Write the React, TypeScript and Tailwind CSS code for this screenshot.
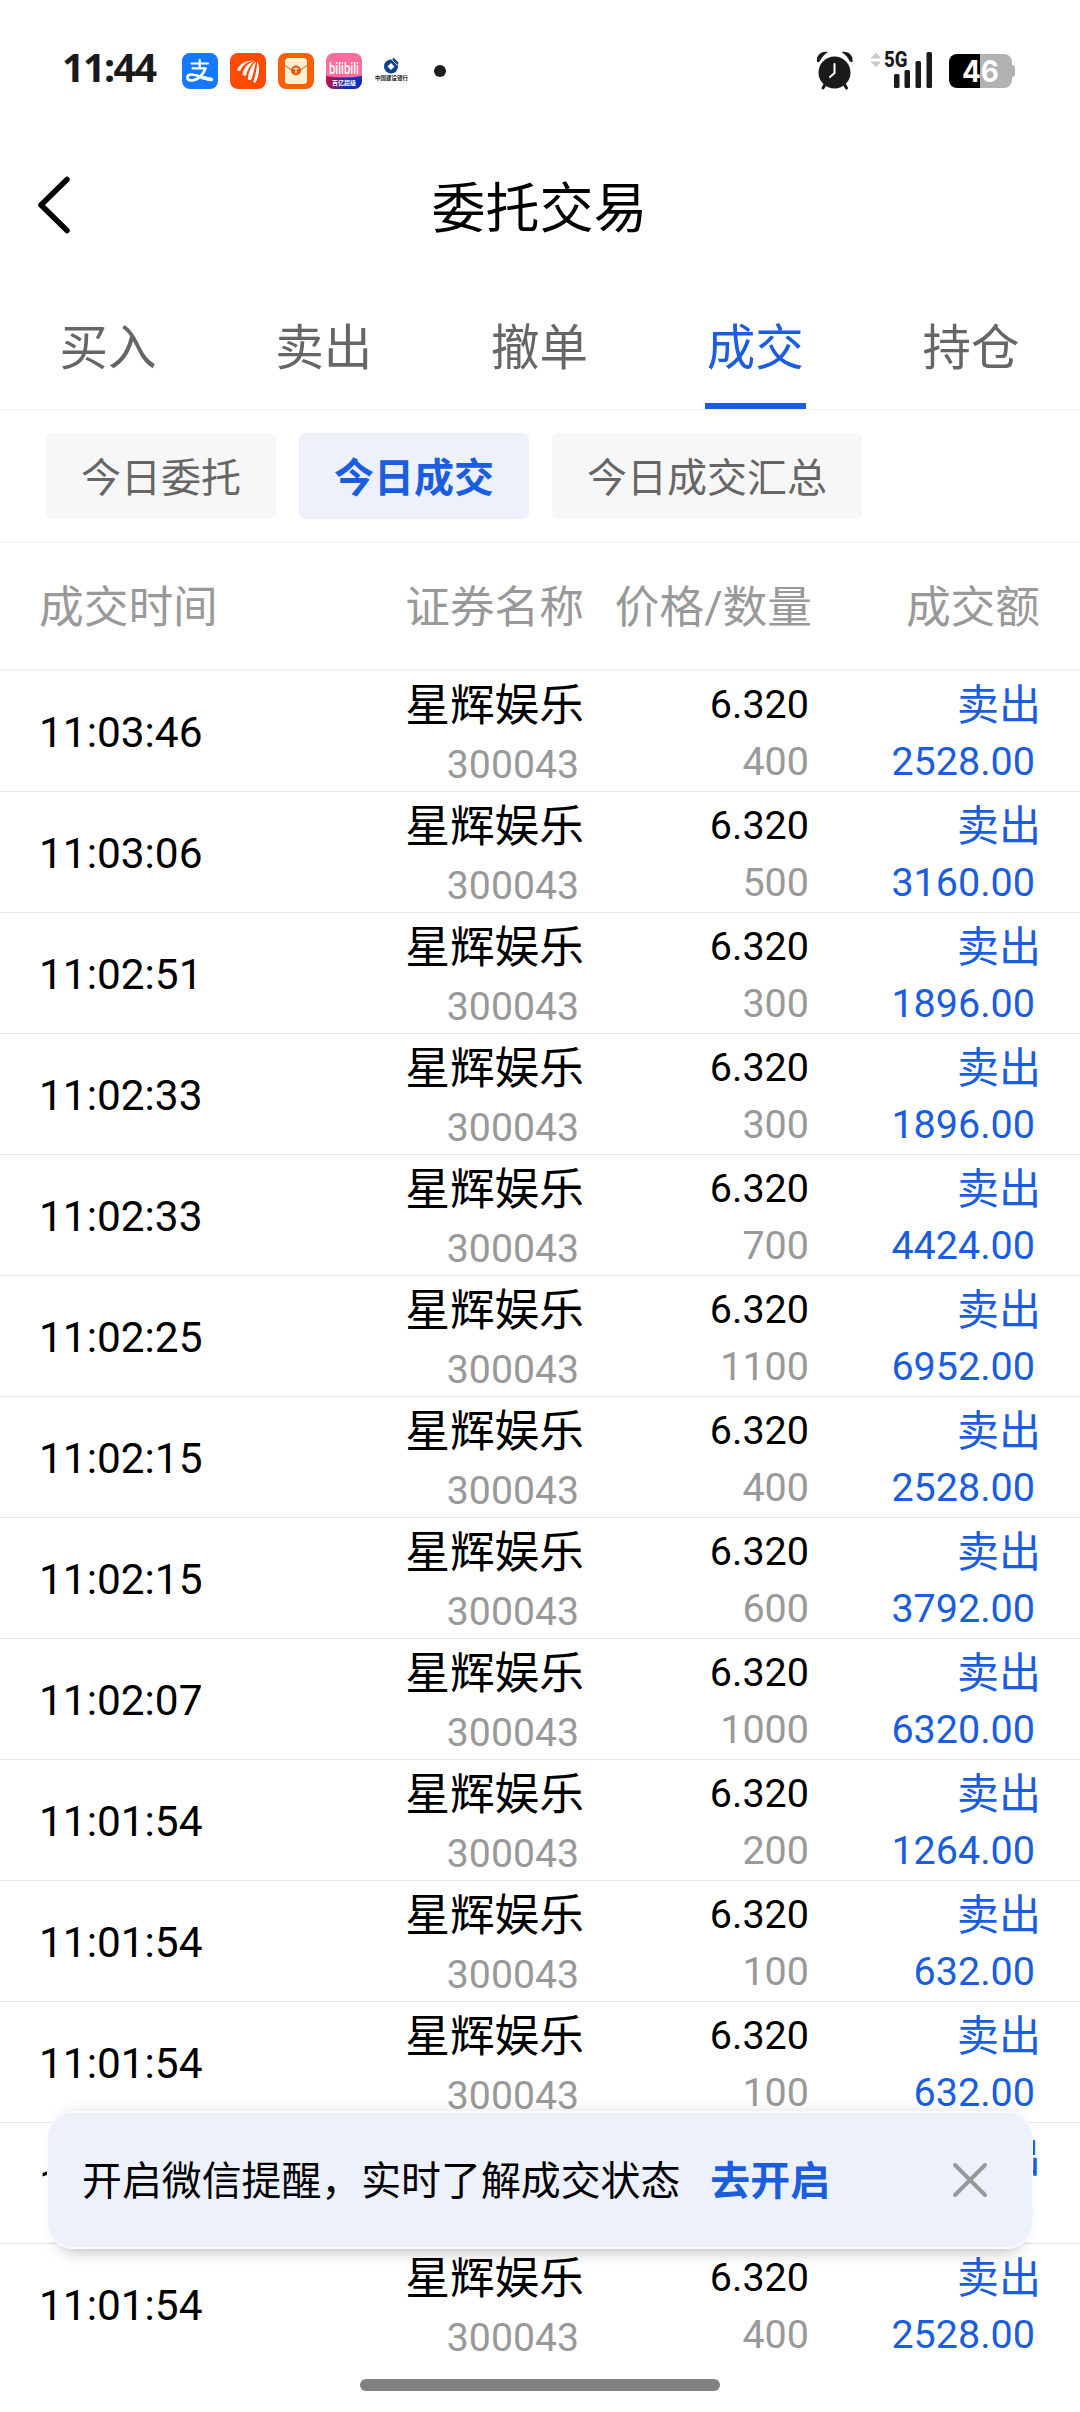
type Trade = {
  time: string;
  qty: string;
  amount: string;
};

const tabs = ["买入", "卖出", "撤单", "成交", "持仓"];
const filters = ["今日委托", "今日成交", "今日成交汇总"];

const trades: Trade[] = [
  { time: "11:03:46", qty: "400", amount: "2528.00" },
  { time: "11:03:06", qty: "500", amount: "3160.00" },
  { time: "11:02:51", qty: "300", amount: "1896.00" },
  { time: "11:02:33", qty: "300", amount: "1896.00" },
  { time: "11:02:33", qty: "700", amount: "4424.00" },
  { time: "11:02:25", qty: "1100", amount: "6952.00" },
  { time: "11:02:15", qty: "400", amount: "2528.00" },
  { time: "11:02:15", qty: "600", amount: "3792.00" },
  { time: "11:02:07", qty: "1000", amount: "6320.00" },
  { time: "11:01:54", qty: "200", amount: "1264.00" },
  { time: "11:01:54", qty: "100", amount: "632.00" },
  { time: "11:01:54", qty: "100", amount: "632.00" },
  { time: "11:01:54", qty: "100", amount: "632.00" },
  { time: "11:01:54", qty: "400", amount: "2528.00" },
];

function AppIcons() {
  return (
    <div className="flex shrink-0 items-center gap-3">
      <svg width="36" height="36" viewBox="0 0 36 36">
        <rect width="36" height="36" rx="8" fill="#1677ff" />
        <g fill="none" stroke="#fff" strokeLinecap="round">
          <path d="M9.500 10.500h16.500M17.700 7v8M10.500 15.300h13" strokeWidth="2.200" />
          <path d="M23.500 15.500C21.500 21 16 27.500 9.500 27.500C4 27.500 4 21.500 9.500 21.500C15.500 21.500 21 25.500 29 27" strokeWidth="2.600" />
          <path d="M20 24.500L29.500 26.500" strokeWidth="3.500" />
        </g>
      </svg>
      <svg width="36" height="36" viewBox="0 0 36 36">
        <rect width="36" height="36" rx="8" fill="#ff4a00" />
        <g fill="#fff">
          <path d="M7 17.500C9 11.500 15 7.500 23.500 7.500C17 9 12.500 12 10.500 17.500Q9 18.300 7 17.500Z" />
          <path d="M12.500 22C13 16 17 10.500 25 7.800C20 12 17.500 16.500 16 22.500Q14 23.300 12.500 22Z" />
          <path d="M17.800 26C18.500 19 21.500 12 26 8.500C24.500 14.500 23.800 20 21.300 26.500Q19 27.500 17.800 26Z" />
          <path d="M23.300 29C25.500 22.500 27 15 27.300 8C30 14 29.500 23 25.500 29.500Q24.200 30 23.300 29Z" />
        </g>
      </svg>
      <svg width="36" height="36" viewBox="0 0 36 36">
        <rect width="36" height="36" rx="8" fill="#fb5f06" />
        <rect x="7" y="5" width="22" height="26" rx="3.500" fill="#fff0cf" />
        <path d="M7 12.500L15 18M29 12.500L21 18" stroke="#c9602c" strokeWidth="1" />
        <circle cx="18" cy="17.500" r="5" fill="#e2571a" />
        <path d="M15.500 15.500h5M18 15.500v5" stroke="#ffdca8" strokeWidth="1.400" />
      </svg>
      <svg width="36" height="36" viewBox="0 0 36 36" overflow="visible">
        <defs>
          <linearGradient id="bili" x1="0" x2="1" y1="0" y2="0">
            <stop offset="0" stopColor="#c4123f" />
            <stop offset="0.6" stopColor="#0b2fc4" />
          </linearGradient>
          <clipPath id="biliClip">
            <rect width="36" height="36" rx="8" />
          </clipPath>
        </defs>
        <g clipPath="url(#biliClip)">
          <rect width="36" height="36" fill="#fb6d9a" />
          <path d="M0 23Q18 26 36 23V36H0Z" fill="url(#bili)" />
        </g>
        <text x="18" y="21" textAnchor="middle" textLength="30" lengthAdjust="spacingAndGlyphs" fontSize="16" fontWeight="500" fill="#fff">
          bilibili
        </text>
        <text x="18" y="32" textAnchor="middle" fontSize="6" fontWeight="700" fill="#fff">
          百亿超级
        </text>
      </svg>
      <svg width="36" height="36" viewBox="0 0 36 36" overflow="visible">
        <circle cx="17" cy="13.500" r="7" fill="#0d4192" />
        <path d="M17 10l3.500 3.500-3.500 3.500-3.500-3.500z" fill="#fff" />
        <path d="M19 5.500l5 5" stroke="#0d4192" strokeWidth="2" />
        <path d="M17.500 6.500l6 6" stroke="#fff" strokeWidth="0.800" />
        <text x="17.500" y="27" textAnchor="middle" fontSize="5.500" fontWeight="700" fill="#222">
          中国建设银行
        </text>
      </svg>
    </div>
  );
}

function StatusBar() {
  return (
    <div className="flex h-[142px] items-center pl-[62px] pr-[65px] text-[#1a1a1a]">
      <span className="w-[120px] shrink-0 pb-[6px] font-['Noto_Sans'] text-[39.5px] font-bold leading-none tracking-[-1.6px]">11:44</span>
      <AppIcons />
      <span className="ml-[24px] size-3 rounded-full bg-[#1a1a1a]" />
      <svg className="ml-auto" width="38" height="40" viewBox="0 0 38 40">
        <g fill="#1a1a1a">
          <circle cx="18.500" cy="21.500" r="16" />
          <path d="M1 10.500C0 4 6 -0.500 12 1Q7 4 3.500 10.500Q2 11.500 1 10.500Z" />
          <path d="M36.500 10.500C37.500 4 31.500 -0.500 25.500 1Q30.500 4 34 10.500Q35.500 11.500 36.500 10.500Z" />
        </g>
        <path d="M9 33.500l-2 3.500M28.500 33.500l2 3.500" stroke="#1a1a1a" strokeWidth="3" strokeLinecap="round" />
        <path d="M18.500 13v9l-4.500 4" fill="none" stroke="#fff" strokeWidth="2" strokeLinecap="round" />
      </svg>
      <svg className="ml-4" width="63" height="40" viewBox="0 0 63 40" overflow="visible">
        <path d="M6 1.500l4.500 5v1h-9.500v-1zM1 10.500h9.500v1l-4.500 4.500-5-4.500z" fill="#cbcbcb" />
        <text x="14" y="16" fontFamily="Roboto" fontSize="21.500" fontWeight="800" textLength="23.500" lengthAdjust="spacingAndGlyphs" fill="#1a1a1a">
          5G
        </text>
        <g fill="#1a1a1a">
          <rect x="24" y="23" width="5.500" height="14" rx="1.500" />
          <rect x="34.500" y="19" width="5.500" height="18" rx="1.500" />
          <rect x="45.500" y="10" width="5.500" height="27" rx="1.500" />
          <rect x="56.500" y="1" width="5.500" height="36" rx="1.500" />
        </g>
      </svg>
      <svg className="ml-4" width="66" height="34" viewBox="0 0 66 34">
        <path d="M31 0h24a8 8 0 0 1 8 8v3q3 0 3 3v6q0 3-3 3v3a8 8 0 0 1-8 8h-24z" fill="#b2b2b2" />
        <path d="M31 0h-23a8 8 0 0 0-8 8v18a8 8 0 0 0 8 8h23z" fill="#000" />
        <text x="31.500" y="28" textAnchor="middle" fontFamily="Inter" fontSize="30" fontWeight="700" fill="#fff" textLength="37" lengthAdjust="spacingAndGlyphs">
          46
        </text>
      </svg>
    </div>
  );
}

function Header() {
  return (
    <header className="flex h-[130px] items-center justify-between px-[36px]">
      <svg className="-mt-1" width="36" height="60" viewBox="0 0 36 60" fill="none">
        <path d="M31 4.500L5 30l26 25.500" stroke="#000" strokeWidth="5.500" strokeLinecap="round" strokeLinejoin="round" />
      </svg>
      <h1 className="pt-[5px] text-[54px] leading-none text-black">委托交易</h1>
      <span className="w-[37px]" />
    </header>
  );
}

function Tabs() {
  return (
    <nav className="grid h-[138px] grid-cols-5 border-b border-[#f0f0f0] pr-px">
      {tabs.map((tab) => (
        <div key={tab} className="flex justify-center">
          <span
            className={
              tab === "成交"
                ? "flex w-[101px] items-center justify-center border-b-[6px] border-[#1a5ddf] pt-[23px] text-[48.5px] text-[#1a5ddf]"
                : "flex w-[101px] items-center justify-center border-b-[6px] border-transparent pt-[23px] text-[48.5px] text-[#666]"
            }
          >
            {tab}
          </span>
        </div>
      ))}
    </nav>
  );
}

function Filters() {
  return (
    <div className="flex h-[133px] items-center gap-[23px] border-b border-[#f3f3f3] pl-[46px]">
      {filters.map((filter) => (
        <span
          key={filter}
          className={
            filter === "今日成交"
              ? "flex h-[86px] items-center rounded-md bg-[#ecf1fc] px-[35px] pt-[5px] text-[40px] font-bold text-[#1a5ddf]"
              : "flex h-[86px] items-center rounded-md bg-[#f7f7f7] px-[35px] pt-[5px] text-[40px] text-[#666]"
          }
        >
          {filter}
        </span>
      ))}
    </div>
  );
}

function TradeRow({ time, qty, amount }: Trade) {
  return (
    <div className="grid h-[121px] grid-cols-[300px_244px_228px_228px] border-b border-[#e4e4e4] pl-[40px] text-right text-[39.5px] last:border-transparent">
      <div className="-ml-px flex items-center pb-[5px] text-[42.4px] text-black">{time}</div>
      <div className="flex flex-col">
        <span className="h-[59px] text-[44.7px] leading-[70px] text-black">星辉娱乐</span>
        <span className="pr-[5px] text-[39.2px] leading-[70px] text-[#999]">300043</span>
      </div>
      <div className="flex flex-col pr-[3px]">
        <span className="h-[56px] leading-[68px] text-black">6.320</span>
        <span className="leading-[70px] text-[#999]">{qty}</span>
      </div>
      <div className="flex flex-col text-[#1a5ddf]">
        <span className="-mr-px h-[56px] text-[42px] leading-[70px]">卖出</span>
        <span className="pr-[5px] leading-[70px]">{amount}</span>
      </div>
    </div>
  );
}

function ReminderBanner() {
  return (
    <div className="absolute left-[47px] top-[2111px] flex h-[138px] w-[986px] items-center rounded-[26px] border-x border-y-2 border-[#fafbff] bg-[#ecf1fc] pl-[34px] pr-[43px] text-[39.9px] text-black shadow-[0_14px_18px_-14px_rgba(0,0,0,0.35),0_-10px_16px_-14px_rgba(0,0,0,0.2)]">
      <span className="pt-1">开启微信提醒，实时了解成交状态</span>
      <span className="ml-[30px] pt-1 font-bold text-[#1a5ddf]">去开启</span>
      <svg className="ml-auto" width="38" height="38" viewBox="0 0 38 38">
        <path d="M4 4l30 30M34 4L4 34" stroke="#999" strokeWidth="4" strokeLinecap="round" />
      </svg>
    </div>
  );
}

export default function App() {
  return (
    <div className="relative h-[2412px] w-[1080px] overflow-hidden bg-white font-[Roboto,'Noto_Sans_CJK_SC',sans-serif]">
      <StatusBar />
      <Header />
      <Tabs />
      <Filters />
      <div className="grid h-[128px] grid-cols-[300px_244px_228px_228px] items-center border-b-2 border-[#f3f3f3] pl-[40px] pt-[6px] text-right text-[44.7px] text-[#999]">
        <span className="-ml-px text-left">成交时间</span>
        <span>证券名称</span>
        <span>价格/数量</span>
        <span>成交额</span>
      </div>
      <div>
        {trades.map((trade, i) => (
          <TradeRow key={i} {...trade} />
        ))}
      </div>
      <ReminderBanner />
      <div className="absolute left-[360px] top-[2379px] h-3 w-[360px] rounded-full bg-[#808080]" />
    </div>
  );
}
